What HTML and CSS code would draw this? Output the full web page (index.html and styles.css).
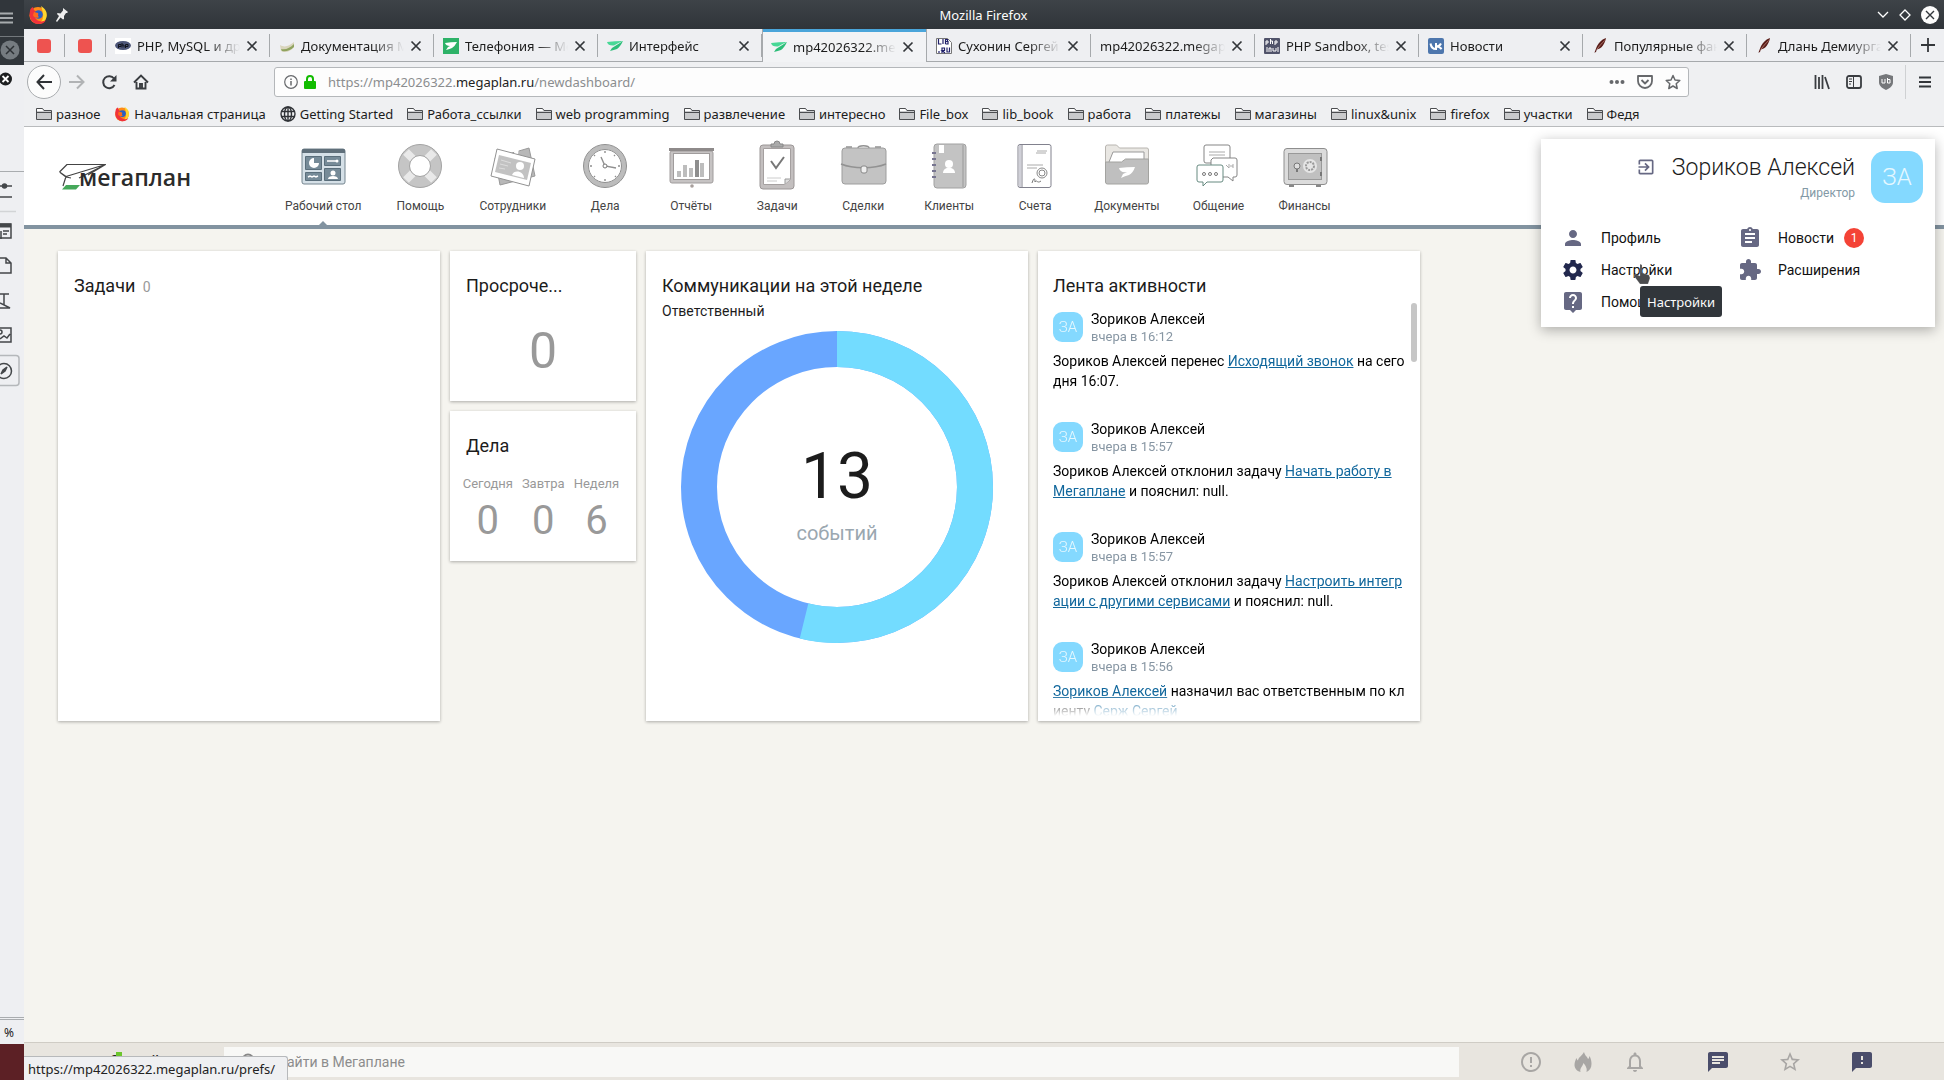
FILE: index.html
```html
<!DOCTYPE html>
<html lang="ru">
<head>
<meta charset="utf-8">
<title>Мегаплан — Рабочий стол</title>
<link rel="stylesheet" href="styles.css">
</head>
<body>
<svg class="defs" aria-hidden="true">
  <symbol id="folder" viewBox="0 0 16 16"><path d="M.5 13.500V2.500h6l1.500 2h7.500v9z" fill="#c9cacc" stroke="#4b4d50"/><path d="M.5 6.500h15" stroke="#4b4d50"/><path d="M1 3h5l1.500 2H1z" fill="#fff"/></symbol>
  <symbol id="close" viewBox="0 0 12 12"><path d="M1.500 1.500l9 9m0-9l-9 9" stroke="#33363a" stroke-width="1.700"/></symbol>
  <symbol id="fox" viewBox="0 0 20 20"><circle cx="10" cy="10.500" r="8.500" fill="#ff8a16"/><path d="M13 1c5 3 6.500 7 5.500 11-1 4-4.500 7-8.500 7 5-3 7-7 3-18z" fill="#ffd52e"/><path d="M2 6C.5 12 3 18 10 19c4 .3 7-1.500 8-4-4 3-10 1-11-3-1-2 1-4 3-4L6 5 5 2C3 3 2 4 2 6z" fill="#f0323c"/><circle cx="10.500" cy="9.500" r="4.300" fill="#2a5fc4"/><path d="M6 7l4 1c1 1-1 3 1 4-2 2-6 0-6-2z" fill="#ff6a1a"/></symbol>
  <symbol id="wing" viewBox="0 0 16 16"><path d="M0 4q8-1 16-1-5 2-9 4.500Q1 8 0 4z" fill="#47d896"/><path d="M16 3q-3 6-6 8-3 1-7 2l2-3z" fill="#2bbd78"/></symbol>
  <symbol id="feather" viewBox="0 0 16 20"><path d="M15.500 0c-6 2-10 7-12 12L1 18.500l2-1 1-3c6-1 10-7 11.500-14.500z" fill="#5a1e1a"/><path d="M14 3c-4 4-7 7-9.500 11" stroke="#c48b80" fill="none"/></symbol>
  <symbol id="person" viewBox="0 0 24 24"><path d="M12 12c2.210 0 4-1.790 4-4s-1.790-4-4-4-4 1.790-4 4 1.790 4 4 4zm0 2c-2.670 0-8 1.340-8 4v2h16v-2c0-2.660-5.330-4-8-4z"/></symbol>
</svg>

<aside class="behind" aria-hidden="true">
  <div class="behind-title"><svg width="24" height="36"><path d="M0 13.500h13M0 18h13M0 22.500h13" stroke="#a7abae" stroke-width="2"/></svg></div>
  <div class="behind-tab"><svg width="24" height="28"><circle cx="10" cy="13" r="9.500" fill="#757b80"/><path d="M6 9l8 8m0-8l-8 8" stroke="#2c3034" stroke-width="1.500"/></svg></div>
  <div class="behind-panel"><svg width="24" height="106"><circle cx="5.500" cy="14" r="6.500" fill="#1d1f21"/><path d="M2.500 11l6 6m0-6l-6 6" stroke="#fff" stroke-width="1.800"/></svg></div>
  <div class="behind-tools">
    <svg width="24" height="220" fill="none" stroke="#44474a" stroke-width="1.500"><path d="M0 14h12M0 25h12" /><circle cx="4.500" cy="14" r="2" fill="#44474a"/><path d="M0 39.500h16" stroke="#d2d4d6"/><path d="M0 52h11v14H0"/><path d="M0 53.500h11" stroke-width="4"/><path d="M3 59h6M3 62h4M1 59v8"/><path d="M0 86h6l5 5v10H0M6 86v5h5"/><path d="M0 122h9M4 122v11M0 131l10 5H0"/><path d="M0 156h11v14H0M0 167l4-3 3 2 3-4"/><circle cx="0" cy="160" r="2"/><rect x="-5" y="183.500" width="24" height="30" rx="3" stroke="#b5b8bb"/><circle cx="4" cy="199" r="7.500"/><path d="M1 202l2-4 4-3-2 4z" fill="#44474a"/></svg>
  </div>
  <div class="behind-zoom">%</div>
  <div class="behind-desktop"></div>
</aside>

<div class="window">
  <header class="titlebar">
    <div class="title-left"><svg width="20" height="20"><use href="#fox"/></svg><svg width="12" height="14" viewBox="0 0 12 14"><path d="M7 0l5 4-1 1h-1L8 8v3l-1 .500-2.500-2L1 14 0 13l3-5-2-2 .500-1 3 .500 2.500-3z" fill="#eee"/></svg></div>
    <span class="title-text">Mozilla Firefox</span>
    <div class="title-right">
      <button aria-label="Свернуть"><svg width="12" height="8"><path d="M1 1l5 5 5-5" fill="none" stroke="#fff" stroke-width="1.300"/></svg></button>
      <button aria-label="Развернуть"><svg width="12" height="12"><path d="M6 1l5 5-5 5-5-5z" fill="none" stroke="#fff" stroke-width="1.300"/></svg></button>
      <button aria-label="Закрыть"><svg width="18" height="18"><circle cx="9" cy="9" r="9" fill="#fcfcfc"/><path d="M5 5l8 8m0-8l-8 8" stroke="#31363b" stroke-width="1.400"/></svg></button>
    </div>
  </header>

  <nav class="tabs" aria-label="Вкладки">
    <a class="tab pinned" href="#" aria-label="Закреплённая вкладка"><i class="red"></i></a>
    <a class="tab pinned" href="#" aria-label="Закреплённая вкладка"><i class="red"></i></a>
    <div class="tab"><svg class="fav" viewBox="0 0 16 16"><path d="M0 0h16v16H0z" fill="#fff"/><ellipse cx="8" cy="7.500" rx="8" ry="4.500" fill="#4d5678"/><path d="M3.500 10V6.500H6v2H3.500M7 5v4.500m0-2.500h2v2.500M10.500 10V6.500H13v2h-2.500" fill="none" stroke="#11131c"/></svg><a href="#">PHP, MySQL и другие</a><button aria-label="Закрыть вкладку"><svg><use href="#close"/></svg></button></div>
    <div class="tab"><svg class="fav" viewBox="0 0 16 16"><path d="M1 7c5 3 9 1 14-3v5c-4 5-9 6-13 4z" fill="#d9d5bd"/><path d="M2 11c5 1 9-1 13-5v3c-4 4-9 5-12 4z" fill="#8fa35f"/></svg><a href="#">Документация Мегаплан</a><button aria-label="Закрыть вкладку"><svg><use href="#close"/></svg></button></div>
    <div class="tab"><svg class="fav" viewBox="0 0 16 16"><path d="M0 0h16v16H0z" fill="#2db268"/><path d="M2 5q6-1 12-1-2 4-5 6-2 1-6 2l2-3 2-1Q3 8 2 5z" fill="#fff"/></svg><a href="#">Телефония — Мегаплан</a><button aria-label="Закрыть вкладку"><svg><use href="#close"/></svg></button></div>
    <div class="tab"><svg class="fav"><use href="#wing"/></svg><a href="#">Интерфейс</a><button aria-label="Закрыть вкладку"><svg><use href="#close"/></svg></button></div>
    <div class="tab active"><svg class="fav"><use href="#wing"/></svg><a href="#">mp42026322.megaplan.ru</a><button aria-label="Закрыть вкладку"><svg><use href="#close"/></svg></button></div>
    <div class="tab"><svg class="fav" viewBox="0 0 16 16"><path d="M.5.5h11l4 4v11H.5z" fill="#fff" stroke="#777"/><path d="M2.500 1v5h3M7 1v5M9.500 6V1.500h2v2h-2m0 0h2.500V6h-2.500M6 15v-5h2.500v2.500H6l3 2.500M11 9.500V14h2.500V9.500M3 13v2" fill="none" stroke="#20206a" stroke-width="1.200"/></svg><a href="#">Сухонин Сергей Сергеевич</a><button aria-label="Закрыть вкладку"><svg><use href="#close"/></svg></button></div>
    <div class="tab"><a href="#">mp42026322.megaplan.ru</a><button aria-label="Закрыть вкладку"><svg><use href="#close"/></svg></button></div>
    <div class="tab"><svg class="fav" viewBox="0 0 16 16"><rect width="16" height="16" rx="1" fill="#50536a"/><path d="M2 7V3h2v2H2M6.500 1v5m0-3h2v3M11 7V3h2v2h-2M3 9v5M5 14v-4h2v4M9 10v3h3v-3M14 9v5" fill="none" stroke="#fff"/></svg><a href="#">PHP Sandbox, test PHP</a><button aria-label="Закрыть вкладку"><svg><use href="#close"/></svg></button></div>
    <div class="tab"><svg class="fav" viewBox="0 0 16 16"><rect width="16" height="16" rx="2" fill="#4d76ad"/><path d="M2.500 5.500c.5 3 2.500 5.500 5.500 5.500V5M13 5.500c-1 2-2.500 3-4.500 3 2 0 4 1 5 2.800" fill="none" stroke="#fff" stroke-width="2"/></svg><a href="#">Новости</a><button aria-label="Закрыть вкладку"><svg><use href="#close"/></svg></button></div>
    <div class="tab"><svg class="fav"><use href="#feather"/></svg><a href="#">Популярные фанфики</a><button aria-label="Закрыть вкладку"><svg><use href="#close"/></svg></button></div>
    <div class="tab"><svg class="fav"><use href="#feather"/></svg><a href="#">Длань Демиурга — глава</a><button aria-label="Закрыть вкладку"><svg><use href="#close"/></svg></button></div>
    <button class="newtab" aria-label="Новая вкладка"><svg width="14" height="14"><path d="M7 0v14M0 7h14" stroke="#33363a" stroke-width="1.800"/></svg></button>
  </nav>

  <div class="toolbar">
    <div class="history">
      <button class="back" aria-label="Назад"><svg width="16" height="16"><path d="M8 1L1.500 8 8 15M2 8h14" fill="none" stroke="#2f3236" stroke-width="2"/></svg></button>
      <button aria-label="Вперёд"><svg width="16" height="16"><path d="M8 1.500L14.500 8 8 14.500M14 8H0" fill="none" stroke="#b1b3b5" stroke-width="2"/></svg></button>
      <button aria-label="Обновить"><svg width="16" height="16"><path d="M13.500 11A6 6 0 1 1 13 4.500" fill="none" stroke="#3a3d41" stroke-width="2"/><path d="M15.500 1v6.500H9z" fill="#3a3d41"/></svg></button>
      <button aria-label="Домой"><svg width="16" height="16"><path d="M1 8.500L8 1.500l7 7M3.500 8v6.500h9V8M7 14v-4h2v4" fill="none" stroke="#3a3d41" stroke-width="1.900"/></svg></button>
    </div>
    <div class="urlbar">
      <svg width="14" height="14"><circle cx="7" cy="7" r="6.300" fill="none" stroke="#67696c" stroke-width="1.200"/><path d="M7 6v4.500M7 3.500v1.500" stroke="#67696c" stroke-width="1.500"/></svg>
      <svg width="12" height="14"><path d="M3 7V4a3 3 0 0 1 6 0v3" fill="none" stroke="#12bc00" stroke-width="2"/><rect y="6" width="12" height="8" rx="1" fill="#12bc00"/></svg>
      <span class="url" role="textbox" aria-label="Адрес">https://mp42026322.<b>megaplan.ru</b>/newdashboard/</span>
      <button aria-label="Действия"><svg width="16" height="16"><g fill="#66686b"><circle cx="2.500" cy="8" r="2"/><circle cx="8" cy="8" r="2"/><circle cx="13.500" cy="8" r="2"/></g></svg></button>
      <button aria-label="Pocket"><svg width="16" height="16"><path d="M1 2h14v5a7 7 0 0 1-14 0zM4.500 6L8 9.500 11.500 6" fill="none" stroke="#66686b" stroke-width="1.800" stroke-linejoin="round"/></svg></button>
      <button aria-label="В закладки"><svg width="16" height="16"><path d="M8 1.500l2 4.500 4.800.5-3.600 3.200 1 4.800L8 12l-4.200 2.500 1-4.800L1.200 6.500 6 6z" fill="none" stroke="#66686b" stroke-width="1.500" stroke-linejoin="round"/></svg></button>
    </div>
    <div class="tools">
      <button aria-label="Библиотека"><svg width="16" height="16"><path d="M1.500 1v14M5 3v12M8.500 1v14M11 3l4 12" stroke="#3a3d41" stroke-width="1.800"/></svg></button>
      <button aria-label="Боковая панель"><svg width="16" height="16"><rect x="1" y="2" width="14" height="12" rx="2" fill="none" stroke="#3a3d41" stroke-width="1.800"/><path d="M7.500 2v12M3 5h3M3 7.500h3M3 10h2" stroke="#3a3d41"/></svg></button>
      <button aria-label="uBlock"><svg width="16" height="16"><path d="M8 0l7 2v6c0 4-3 6-7 8-4-2-7-4-7-8V2z" fill="#75777a"/><path d="M4 5v4h3V5M9.500 4v5H12V5.500H9.500" fill="none" stroke="#fff"/></svg></button>
      <button class="menu" aria-label="Меню"><svg width="14" height="14"><path d="M1 2.500h12M1 7h12M1 11.500h12" stroke="#33363a" stroke-width="2"/></svg></button>
    </div>
  </div>

  <nav class="bookmarks" aria-label="Закладки">
    <a href="#"><svg><use href="#folder"/></svg>разное</a>
    <a href="#"><svg><use href="#fox"/></svg>Начальная страница</a>
    <a href="#"><svg viewBox="0 0 16 16"><g fill="none" stroke="#2f3236" stroke-width="1.400"><circle cx="8" cy="8" r="7"/><ellipse cx="8" cy="8" rx="3.500" ry="7"/><path d="M1 5.500h14M1 10.500h14M8 1v14"/></g></svg>Getting Started</a>
    <a href="#"><svg><use href="#folder"/></svg>Работа_ссылки</a>
    <a href="#"><svg><use href="#folder"/></svg>web programming</a>
    <a href="#"><svg><use href="#folder"/></svg>развлечение</a>
    <a href="#"><svg><use href="#folder"/></svg>интересно</a>
    <a href="#"><svg><use href="#folder"/></svg>File_box</a>
    <a href="#"><svg><use href="#folder"/></svg>lib_book</a>
    <a href="#"><svg><use href="#folder"/></svg>работа</a>
    <a href="#"><svg><use href="#folder"/></svg>платежы</a>
    <a href="#"><svg><use href="#folder"/></svg>магазины</a>
    <a href="#"><svg><use href="#folder"/></svg>linux&amp;unix</a>
    <a href="#"><svg><use href="#folder"/></svg>firefox</a>
    <a href="#"><svg><use href="#folder"/></svg>участки</a>
    <a href="#"><svg><use href="#folder"/></svg>Федя</a>
  </nav>

  <div class="page">
    <header class="site-header">
      <a class="logo" href="#" aria-label="Мегаплан"><svg width="50" height="28" viewBox="0 0 50 28" fill="none" stroke="#444" stroke-width="1.200"><path d="M1.500 9L9 1.500h38.500L30 12M1.500 9l6.500 4.500L47.500 1.500 21 15M8 13.500L5 23M1.500 9l6.500 5 5 1" stroke-linejoin="round"/><path d="M8 22h14l-4 4.500H4z" fill="#45a85a" stroke="none"/></svg><span>мегаплан</span></a>
      <nav class="sections" aria-label="Разделы">
        <a class="current" href="#"><svg viewBox="0 0 44 44"><rect x="1" y="5" width="43" height="35" rx="2" fill="#d5e0e7" stroke="#75858f"/><path d="M1 9V6l1-1h41l1 1v3z" fill="#5f6f7a"/><g fill="#768b98" stroke="#5a6e7b"><path d="M4.500 12.500h16v13h-16zM23.500 12.500h16v9h-16zM4.500 28.500h16v8h-16zM23.500 24.500h16v12h-16z"/></g><path d="M13 14v5h5a5 5 0 1 1-5-5zM27 35c0-4 10-4 10 0z" fill="#fff"/><circle cx="32" cy="29" r="2.500" fill="#fff"/><path d="M26 17h10M7 33l2-1 2 1 2-1 2 1 2-1" stroke="#fff" fill="none" stroke-width="1.500"/><circle cx="36" cy="17" r="1.500" fill="#fff"/></svg>Рабочий стол</a>
        <a href="#"><svg viewBox="0 0 44 44"><circle cx="22" cy="22" r="16" fill="none" stroke="#c5c5c5" stroke-width="11"/><path d="M8 8l7 7M29 29l7 7M36 8l-7 7M15 29l-7 7" stroke="#e9e9e9" stroke-width="8"/><g fill="none" stroke="#a3a3a3"><circle cx="22" cy="22" r="21.500"/><circle cx="22" cy="22" r="10.500"/></g></svg>Помощь</a>
        <a href="#"><svg viewBox="0 0 44 44"><path d="M4 14L38 4l6 28L9 41z" fill="#b8b8b8" stroke="#999"/><path d="M6 5l38 10-6 27L0 32z" fill="#fff" stroke="#929292"/><path d="M8 11l32 8-4 17-32-8z" fill="#c2c2c2"/><circle cx="29" cy="22" r="4" fill="#fff"/><path d="M21 31c2-6 12-4 12 3zM24 3l4 1-1 6-4-1z" fill="#fff"/><path d="M10 16l10 3M9 20l8 2M8 24l6 1" stroke="#ddd"/></svg>Сотрудники</a>
        <a href="#"><svg viewBox="0 0 44 44"><circle cx="22" cy="22" r="19" fill="#fff" stroke="#bcbcbc" stroke-width="4.500"/><g fill="none" stroke="#8f8f8f"><circle cx="22" cy="22" r="21.500"/><circle cx="22" cy="22" r="16.500"/><path d="M18 13l4 9 11 2M22 7v2M22 35v2M7 22h2M35 22h2M11 11l1 1M32 32l1 1M32 11l-1 1M11 33l1-1" stroke-width="1.400"/></g><circle cx="22" cy="22" r="2" fill="#fff" stroke="#777"/></svg>Дела</a>
        <a href="#"><svg viewBox="0 0 44 44"><rect x="1" y="7" width="43" height="32" rx="2" fill="#c6c3c3" stroke="#a09c9c"/><rect x="4.500" y="9.500" width="36" height="26" fill="#fff" stroke="#a09c9c"/><path d="M0 4h45v3H0z" fill="#8e8a8a"/><path d="M8 27h4v6H8zM14 21h4v12h-4zM20 24h4v9h-4zM31 19h4v14h-4z" fill="#bdbdbd"/><path d="M26 16h4v17h-4z" fill="#8e8e8e"/><circle cx="23" cy="42" r="1.800" fill="#a79f9c"/></svg>Отчёты</a>
        <a href="#"><svg viewBox="0 0 44 44"><rect x="5" y="1" width="34" height="44" rx="3" fill="#c3bfbf" stroke="#9b9696"/><path d="M8.500 4.500h27v31l-6 5h-21z" fill="#fff" stroke="#a5a0a0"/><path d="M30 40v-5h5" fill="#ddd" stroke="#999"/><path d="M16 3V0h3a3 3 0 0 1 6 0h3v3z" fill="#aaa" stroke="#888"/><path d="M16 17l5 7 8-11" fill="none" stroke="#777" stroke-width="2"/><path d="M12 34h14M12 37h10" stroke="#ccc"/></svg>Задачи</a>
        <a href="#"><svg viewBox="0 0 44 44"><rect x="1" y="4" width="44" height="36" rx="3" fill="#c3c3c3" stroke="#9d9d9d"/><path d="M0 20c12 5 33 5 45 0M17 4c0-3 11-3 11 0M5 3h6M34 3h6" fill="none" stroke="#929292" stroke-width="1.400"/><rect x="20" y="22" width="6" height="7" rx="2" fill="#eee" stroke="#888"/></svg>Сделки</a>
        <a href="#"><svg viewBox="0 0 44 44"><rect x="7" y="0" width="32" height="44" rx="3" fill="#c3c3c3" stroke="#a1a1a1"/><path d="M36 1v42" stroke="#999"/><path d="M12 1h5v8h-5z" fill="#fff"/><path d="M5 9h4M5 15h4M5 21h4M5 27h4M5 33h4" stroke="#777590" stroke-width="2"/><circle cx="22" cy="20" r="4" fill="#fff"/><path d="M16 29c0-7 12-7 12 0z" fill="#fff"/></svg>Клиенты</a>
        <a href="#"><svg viewBox="0 0 44 44"><rect x="5" y="0.500" width="33" height="43" rx="2" fill="#fff" stroke="#81818d"/><path d="M9 1v42" stroke="#81818d"/><path d="M6 1h2v42H6z" fill="#d0d0d8"/><path d="M24 7h10M23 9h10M14 21h16M14 24h10" stroke="#aaa"/><circle cx="29" cy="29" r="5" fill="none" stroke="#888"/><circle cx="29" cy="29" r="3" fill="none" stroke="#888"/><path d="M19 39c2-6 3-5 3-1 2-3 2 2 6-1" fill="none" stroke="#777"/></svg>Счета</a>
        <a href="#"><svg viewBox="0 0 44 44"><path d="M0.500 18V3q0-2 2-2h9l3 3H42q1.500 0 1.500 2v15" fill="#e9e7e3" stroke="#b8b5b0"/><path d="M4 18l4-10h31v12H4z" fill="#fff" stroke="#999"/><path d="M0.500 38V18h16l4-3h23v23q0 2-2 2h-39q-2 0-2-2z" fill="#bfbfbf" stroke="#a3a3a0"/><path d="M14 24q8-1 16-1-2 6-6 8-4 1-8 3l2-4 4-2q-7 1-8-4z" fill="#fff"/></svg>Документы</a>
        <a href="#"><svg viewBox="0 0 44 44"><g fill="#fff" stroke="#858585"><path d="M11 1h20q2 0 2 2v16H9q-2 0-2-2V3q0-2 2-2z"/><path d="M16 14h22q2 0 2 2v15q0 2-2 2h-2v4l-5-4H14V16z"/><path d="M2 21h22q2 0 2 2v13q0 2-2 2H10l-4 4v-4H2q-2 0-2-2V23q0-2 2-2z" stroke="#668a80"/></g><path d="M12 8h16M12 11h16M29 21l3 3v-4m4 0v4m-3-2h3" stroke="#aaa" fill="none"/><g fill="none" stroke="#777"><circle cx="7" cy="30" r="1.500"/><circle cx="13" cy="30" r="1.500"/><circle cx="19" cy="30" r="1.500"/></g></svg>Общение</a>
        <a href="#"><svg viewBox="0 0 44 44"><path d="M6 40h5v3H6zM33 40h5v3h-5z" fill="#888"/><rect x="1" y="4.500" width="43" height="36" rx="3" fill="#dcdcdc" stroke="#8e8e8e"/><rect x="5.500" y="9.500" width="33" height="26" fill="#c0c0c0" stroke="#999"/><circle cx="14" cy="22" r="3" fill="#ddd" stroke="#777"/><path d="M14 25v3M38 13v4M38 28v4" stroke="#777" stroke-width="2"/><circle cx="27" cy="22" r="7" fill="#e5e5e5"/><circle cx="27" cy="22" r="4" fill="none" stroke="#999" stroke-width="2" stroke-dasharray="2 1"/></svg>Финансы</a>
      </nav>
    </header>

    <main class="widgets">
      <section class="card big"><h2>Задачи <small>0</small></h2></section>
      <section class="card small-card"><h2>Просроче...</h2><p class="total">0</p></section>
      <section class="card big">
        <h2>Коммуникации на этой неделе</h2>
        <p class="sub">Ответственный</p>
        <div class="donut">
          <svg viewBox="0 0 312 312"><circle cx="156" cy="156" r="138" fill="none" stroke="#69a6ff" stroke-width="36"/><circle cx="156" cy="156" r="138" fill="none" stroke="#73dcff" stroke-width="36" pathLength="13" stroke-dasharray="7 6" transform="rotate(-90 156 156)"/></svg>
          <div class="donut-text"><strong>13</strong><span>событий</span></div>
        </div>
      </section>
      <section class="card big feed">
        <h2>Лента активности</h2>
        <div class="feed-list">
          <article><div class="who"><span class="avatar">ЗА</span><div><b>Зориков Алексей</b><time>вчера в 16:12</time></div></div><p>Зориков Алексей перенес <a href="#">Исходящий звонок</a> на сего<br>дня 16:07.</p></article>
          <article><div class="who"><span class="avatar">ЗА</span><div><b>Зориков Алексей</b><time>вчера в 15:57</time></div></div><p>Зориков Алексей отклонил задачу <a href="#">Начать работу в<br>Мегаплане</a> и пояснил: null.</p></article>
          <article><div class="who"><span class="avatar">ЗА</span><div><b>Зориков Алексей</b><time>вчера в 15:57</time></div></div><p>Зориков Алексей отклонил задачу <a href="#">Настроить интегр<br>ации с другими сервисами</a> и пояснил: null.</p></article>
          <article><div class="who"><span class="avatar">ЗА</span><div><b>Зориков Алексей</b><time>вчера в 15:56</time></div></div><p><a href="#">Зориков Алексей</a> назначил вас ответственным по кл<br>иенту <a href="#">Серж Сергей</a></p></article>
        </div>
        <i class="thumb"></i>
      </section>
      <section class="card small-card deals"><h2>Дела</h2>
        <dl><div><dt>Сегодня</dt><dd>0</dd></div><div><dt>Завтра</dt><dd>0</dd></div><div><dt>Неделя</dt><dd>6</dd></div></dl>
      </section>
    </main>

    <footer class="bottombar">
      <div class="brand">Sputnik<i></i></div>
      <label class="search"><svg width="18" height="18"><circle cx="7" cy="7" r="5.500" fill="none" stroke="#888" stroke-width="2"/><path d="M11 11l6 6" stroke="#888" stroke-width="2"/></svg><input type="text" placeholder="Найти в Мегаплане" aria-label="Найти в Мегаплане"></label>
      <div class="quick">
        <button aria-label="Важное"><svg viewBox="0 0 24 24"><path d="M11 15h2v2h-2zm0-8h2v6h-2zm.990-5C6.470 2 2 6.480 2 12s4.470 10 9.990 10C17.520 22 22 17.520 22 12S17.520 2 11.990 2zM12 20c-4.420 0-8-3.580-8-8s3.580-8 8-8 8 3.580 8 8-3.580 8-8 8z"/></svg></button>
        <button aria-label="Срочное"><svg viewBox="0 0 24 24"><path d="M13 2c1 4 3 4 4 7 1-.5 1-1.500 1.500-3 1.500 3 2 5 2 8 0 4-2 6.500-5 8 1-4-1-6-3-9-1 4-4 5-3 9-4-1-6-4-6-7 0-3 1-5 2-7 .5 1 .5 2 1.500 2.500C7.500 7 11 6 13 2z"/></svg></button>
        <button aria-label="Уведомления"><svg viewBox="0 0 24 24"><path d="M12 22c1.100 0 2-.9 2-2h-4c0 1.100.9 2 2 2zm6-6v-5c0-3.070-1.630-5.640-4.500-6.320V4c0-.830-.670-1.500-1.500-1.500s-1.500.670-1.500 1.500v.680C7.640 5.360 6 7.920 6 11v5l-2 2v1h16v-1l-2-2zm-2 1H8v-6c0-2.480 1.510-4.500 4-4.500s4 2.020 4 4.500v6z"/></svg></button>
        <button class="wide dark" aria-label="Чат"><svg viewBox="0 0 24 24"><path d="M20 2H4c-1.100 0-1.990.9-1.990 2L2 22l4-4h14c1.100 0 2-.9 2-2V4c0-1.100-.9-2-2-2zM6 9h12v2H6V9zm8 5H6v-2h8v2zm4-6H6V6h12v2z"/></svg></button>
        <button class="wide" aria-label="Избранное"><svg viewBox="0 0 24 24"><path d="M22 9.240l-7.190-.620L12 2 9.190 8.630 2 9.240l5.460 4.730L5.820 21 12 17.270 18.180 21l-1.630-7.030L22 9.240zM12 15.400l-3.760 2.270 1-4.280-3.320-2.880 4.380-.380L12 6.100l1.710 4.040 4.380.380-3.320 2.880 1 4.280L12 15.400z"/></svg></button>
        <button class="wide dark" aria-label="Отзыв"><svg viewBox="0 0 24 24"><path d="M20 2H4c-1.100 0-1.990.9-1.990 2L2 22l4-4h14c1.100 0 2-.9 2-2V4c0-1.100-.9-2-2-2zm-7 12h-2v-2h2v2zm0-4h-2V6h2v4z"/></svg></button>
      </div>
    </footer>

    <div class="profile">
      <div class="profile-head">
        <button aria-label="Выйти"><svg width="20" height="20" viewBox="0 0 24 24"><path d="M10.090 15.590L11.500 17l5-5-5-5-1.410 1.410L12.670 11H3v2h9.670l-2.580 2.590zM19 3H5c-1.110 0-2 .9-2 2v4h2V5h14v14H5v-4H3v4c0 1.100.890 2 2 2h14c1.100 0 2-.9 2-2V5c0-1.100-.9-2-2-2z"/></svg></button>
        <div class="profile-name"><strong>Зориков Алексей</strong><span>Директор</span></div>
        <span class="avatar large">ЗА</span>
      </div>
      <div class="profile-menu">
        <a href="#"><svg><use href="#person"/></svg>Профиль</a>
        <a href="#"><svg viewBox="0 0 24 24"><path d="M19 3h-4.180C14.400 1.840 13.300 1 12 1c-1.300 0-2.400.840-2.820 2H5c-1.100 0-2 .9-2 2v14c0 1.100.9 2 2 2h14c1.100 0 2-.9 2-2V5c0-1.100-.9-2-2-2zm-7 0c.550 0 1 .450 1 1s-.450 1-1 1-1-.450-1-1 .450-1 1-1zm2 14H7v-2h7v2zm3-4H7v-2h10v2zm0-4H7V7h10v2z"/></svg>Новости<em>1</em></a>
        <a class="hovered" href="#"><svg viewBox="0 0 24 24"><path d="M19.430 12.980c.040-.320.070-.640.070-.980s-.030-.660-.070-.980l2.110-1.650c.190-.150.240-.420.120-.640l-2-3.460c-.120-.220-.390-.300-.610-.220l-2.490 1c-.520-.400-1.080-.730-1.690-.980l-.380-2.650C14.460 2.180 14.250 2 14 2h-4c-.250 0-.460.180-.490.420l-.380 2.650c-.610.250-1.170.590-1.690.980l-2.490-1c-.230-.090-.490 0-.610.220l-2 3.460c-.130.220-.070.490.120.640l2.110 1.650c-.040.320-.070.650-.070.980s.030.660.070.980l-2.110 1.650c-.190.150-.240.420-.120.640l2 3.460c.120.220.390.300.610.220l2.490-1c.520.400 1.080.730 1.690.980l.380 2.650c.030.240.240.420.490.420h4c.250 0 .460-.180.490-.420l.380-2.650c.610-.250 1.170-.590 1.690-.980l2.490 1c.230.090.490 0 .610-.220l2-3.460c.120-.220.070-.490-.120-.640l-2.110-1.650zM12 15.500c-1.930 0-3.500-1.570-3.500-3.500s1.570-3.500 3.500-3.500 3.500 1.570 3.500 3.500-1.570 3.500-3.500 3.500z"/></svg>Настройки</a>
        <a href="#"><svg viewBox="0 0 24 24"><path d="M20.500 11H19V7c0-1.100-.9-2-2-2h-4V3.500C13 2.120 11.880 1 10.500 1S8 2.120 8 3.500V5H4c-1.100 0-1.990.9-1.990 2v3.800H3.500c1.490 0 2.700 1.210 2.700 2.700s-1.210 2.700-2.700 2.700H2V20c0 1.100.9 2 2 2h3.800v-1.500c0-1.490 1.210-2.700 2.700-2.700 1.490 0 2.700 1.210 2.700 2.700V22H17c1.100 0 2-.9 2-2v-4h1.500c1.380 0 2.500-1.120 2.500-2.500S21.880 11 20.500 11z"/></svg>Расширения</a>
        <a href="#"><svg viewBox="0 0 24 24"><path d="M19 2H5c-1.110 0-2 .9-2 2v14c0 1.100.890 2 2 2h4l3 3 3-3h4c1.100 0 2-.9 2-2V4c0-1.100-.9-2-2-2zm-6 16h-2v-2h2v2zm2.070-7.750l-.9.920C13.450 11.900 13 12.500 13 14h-2v-.5c0-1.100.450-2.100 1.170-2.830l1.240-1.260c.370-.360.590-.860.590-1.410 0-1.100-.9-2-2-2s-2 .9-2 2H8c0-2.210 1.790-4 4-4s4 1.790 4 4c0 .880-.360 1.680-.930 2.250z"/></svg>Помощь</a>
      </div>
      <svg class="cursor" width="18" height="20"><path d="M7 0l2 1v8l7 2 1 3-2 6H7l-6-8 1-2 5 2z" fill="#4b4c4e" stroke="#fff" stroke-opacity=".35" stroke-width=".5"/></svg>
      <span class="tooltip" role="tooltip">Настройки</span>
    </div>
    <div class="status">https://mp42026322.megaplan.ru/prefs/</div>
  </div>
</div>
</body>
</html>
```
FILE: styles.css
```css
* { box-sizing: border-box; }
body {
  margin: 0;
  min-height: 100vh;
  display: grid;
  grid-template-columns: 24px 1fr;
  background: #f5f4ef;
  color: #1c1c1c;
  font: 14px/20px Roboto, "Noto Sans", sans-serif;
}
h2, p, dl, dd { margin: 0; }
button { padding: 0; border: 0; background: none; font: inherit; display: flex; align-items: center; justify-content: center; }
a { color: inherit; text-decoration: none; }
svg { display: block; flex: none; }
.defs { position: absolute; width: 0; height: 0; }

/* Edge of the window lying behind the browser */
.behind { display: flex; flex-direction: column; background: #eeeff2; overflow: hidden; }
.behind-title { height: 36px; background: #31363b; }
.behind-tab { height: 29px; background: #31363b; border-top: 1px solid #73787c; }
.behind-panel { height: 107px; border-bottom: 1px solid #a9acaf; }
.behind-tools { flex: 1; border-bottom: 3px double #a9acaf; }
.behind-zoom { height: 24px; padding-left: 4px; font: 12px/26px "Noto Sans", sans-serif; }
.behind-desktop { height: 36px; background: #5c2025; }

/* Browser frame */
.window { display: flex; flex-direction: column; min-width: 0; }
.titlebar, .tabs, .toolbar, .bookmarks, .tooltip, .status { font-family: "Noto Sans", sans-serif; font-size: 13px; }
.titlebar {
  display: grid;
  grid-template-columns: 1fr auto 1fr;
  align-items: center;
  height: 29px;
  padding: 0 5px 0 4px;
  background: linear-gradient(#3e4348, #2f3439);
  color: #fcfcfc;
}
.title-left, .title-right { display: flex; align-items: center; gap: 8px; }
.title-right { justify-content: flex-end; gap: 10px; }

.tabs { display: flex; height: 33px; background: #eeeff2; }
.tab {
  position: relative;
  flex: 1;
  min-width: 0;
  display: flex;
  align-items: center;
  gap: 6px;
  padding: 2px 12px 0 9px;
  border-bottom: 1px solid #a6a9ac;
}
.tab::after { content: ""; position: absolute; right: 0; top: 5px; bottom: 4px; width: 1px; background: #a6a9ac; }
.tab.pinned { flex: 0 0 41px; padding: 2px 1px 0 0; justify-content: center; }
.red { width: 14px; height: 14px; border-radius: 3px; background: #ee5350; }
.tab a { flex: 1; overflow: hidden; white-space: nowrap; -webkit-mask-image: linear-gradient(to left, transparent, #000 32px); mask-image: linear-gradient(to left, transparent, #000 32px); }
.tab button svg { width: 12px; height: 12px; }
.fav { width: 16px; height: 16px; }
.tab.active { padding-left: 8px; border: solid #a6a9ac; border-width: 0 1px; background: #f2f3f5; box-shadow: inset 0 3px #4aa5da; }
.tab.active::after { display: none; }
.newtab { width: 33px; border-bottom: 1px solid #a6a9ac; }

.toolbar { display: flex; align-items: center; gap: 125px; height: 40px; padding: 0 12px 0 3px; background: #eff0f2; }
.history, .tools { display: flex; align-items: center; gap: 16px; }
.history .back { width: 34px; height: 34px; margin-right: -8px; border: 1px solid #a9acaf; border-radius: 50%; background: #fcfcfc; }
.urlbar { flex: 1; display: flex; align-items: center; gap: 12px; height: 30px; padding: 0 7px 0 9px; border: 1px solid #b4b7ba; border-radius: 3px; background: #fdfdfd; }
.urlbar > svg + svg { margin-left: -6px; }
.url { flex: 1; color: #8b8d8f; }
.url b { font-weight: 400; color: #222; }
.tools .menu { height: 34px; padding-left: 12px; margin-left: -5px; border-left: 1px solid #cfd1d3; }

.bookmarks { display: flex; align-items: center; gap: 14px; height: 25px; padding: 0 12px; border-bottom: 1px solid #b9bbbd; background: #eff0f2; white-space: nowrap; }
.bookmarks a { display: flex; align-items: center; gap: 4px; }
.bookmarks svg { width: 16px; height: 16px; }

/* Megaplan */
.page { position: relative; flex: 1; display: flex; flex-direction: column; }
.site-header { display: flex; height: 102px; padding-left: 34px; background: #fff; border-bottom: 4px solid #8293a0; }
.logo { position: relative; width: 211px; padding: 36px 0 0 21px; color: #2b2b2b; font: 600 23px/28px "Open Sans", sans-serif; }
.logo svg { position: absolute; left: 0; top: 36px; }
.logo span { position: relative; }
.sections { display: flex; }
.sections a {
  position: relative;
  min-width: 86px;
  padding: 17px 16px 0;
  display: flex;
  flex-direction: column;
  align-items: center;
  gap: 8px;
  color: #444;
  font-size: 12px;
  white-space: nowrap;
}
.sections svg { width: 44px; height: 44px; overflow: visible; }
.sections .current::after { content: ""; position: absolute; bottom: 0; border: 4px solid transparent; border-top: 0; border-bottom-color: #8293a0; }

.widgets { flex: 1; display: grid; grid-template-columns: repeat(auto-fill, 186px); grid-auto-rows: 150px; gap: 10px; padding: 22px 34px; align-content: start; }
.card { position: relative; padding: 25px 16px 0; background: #fff; box-shadow: 0 1px 3px rgba(0, 0, 0, .3); }
.big { grid-column: span 2; grid-row: span 3; }
.deals { grid-column: 3; grid-row: 2; }
h2 { font-size: 18px; line-height: 20px; font-weight: 400; white-space: nowrap; }
h2 small { margin-left: 3px; color: #999; font-size: 14px; }
.total { margin-top: 35px; color: #999; text-align: center; font-size: 50px; line-height: 40px; }
.sub { margin-top: 5px; font-size: 14px; }
.deals dl { display: flex; justify-content: center; gap: 9px; margin-top: 18px; padding-right: 4px; color: #999; text-align: center; }
.deals dt { font-size: 13px; }
.deals dd { margin-top: 7px; font-size: 40px; line-height: 40px; }
.donut { position: relative; width: 312px; margin: 10px auto 0; }
.donut-text { position: absolute; inset: 0; display: flex; flex-direction: column; align-items: center; justify-content: center; gap: 12px; padding-top: 16px; }
.donut strong { font-size: 64px; line-height: 64px; font-weight: 400; }
.donut span { color: #9aa7b0; font-size: 20px; line-height: 24px; }

.feed { padding: 25px 15px 1px; display: flex; flex-direction: column; }
.feed-list { flex: 1; min-height: 0; margin-top: 13px; overflow: hidden; white-space: nowrap; color: #000; -webkit-mask-image: linear-gradient(to top, transparent 4px, #000 26px); mask-image: linear-gradient(to top, transparent 4px, #000 26px); }
.feed article { height: 110px; }
.who { display: flex; gap: 8px; height: 36px; }
.who b { display: block; font-weight: 400; line-height: 20px; }
.who time { display: block; color: #8796a3; font-size: 13px; line-height: 16px; }
.avatar { width: 30px; height: 30px; margin-top: 3px; border-radius: 9px; background: #84d9ff; color: #e6f8ff; font-size: 15px; line-height: 30px; text-align: center; font-weight: 300; }
.feed p { margin-top: 6px; }
.feed p a { color: #11679c; text-decoration: underline; }
.thumb { position: absolute; right: 3px; top: 52px; width: 6px; height: 59px; border-radius: 3px; background: #c6c6c6; }

.bottombar { display: flex; align-items: center; height: 38px; border-top: 1px solid #cfccc5; background: #e8e5df; }
.brand { position: relative; width: 200px; padding-left: 86px; color: #222; font-size: 16px; }
.brand i { position: absolute; left: 92px; top: 0; width: 6px; height: 6px; background: #6cc62c; }
.search { flex: 1; display: flex; align-items: center; gap: 12px; height: 30px; padding-left: 17px; background: #f8f8f6; }
.search input { flex: 1; border: 0; padding: 0 6px; background: none; font: inherit; }
.search input::placeholder { color: #8c8c8c; }
.quick { display: flex; padding: 0 46px; }
.quick button { width: 52px; fill: #a8a6a4; }
.quick .wide { width: 72px; }
.quick .wide:nth-child(4) { margin-left: 21px; }
.quick .dark { fill: #4a4d6b; }
.quick svg { width: 24px; height: 24px; }

.profile { position: absolute; right: 9px; top: 12px; width: 394px; height: 188px; padding: 12px 12px 0; background: #fff; box-shadow: 0 3px 12px rgba(0, 0, 0, .3); }
.profile-head { display: flex; justify-content: flex-end; gap: 16px; height: 71px; }
.profile-head button { align-self: flex-start; margin-top: 6px; fill: #666883; }
.profile-name { text-align: right; }
.profile-name strong { display: block; font-size: 23px; line-height: 34px; font-weight: 300; }
.profile-name span { display: block; color: #8399a6; font-size: 12px; line-height: 16px; }
.avatar.large { width: 52px; height: 52px; margin: 0; border-radius: 14px; font-size: 24px; line-height: 52px; }
.profile-menu { display: grid; grid-template-columns: 177px 1fr; grid-auto-rows: 32px; padding-left: 8px; color: #111; }
.profile-menu a { display: flex; align-items: center; gap: 16px; }
.profile-menu svg { width: 24px; height: 24px; fill: #666883; }
.profile-menu .hovered svg { fill: #22284d; }
.profile-menu em { width: 20px; height: 20px; margin-left: -6px; border-radius: 50%; background: #f44336; color: #fff; font-size: 12px; font-style: normal; text-align: center; }
.cursor { position: absolute; left: 92px; top: 125px; }
.tooltip { position: absolute; left: 99px; top: 147px; padding: 6px 7px 5px; border-radius: 3px; background: #31363b; color: #fcfcfc; }
.status { position: absolute; left: 0; bottom: 0; height: 24px; padding: 0 12px 0 4px; border: solid #b7b9bb; border-width: 1px 1px 0 0; border-top-right-radius: 3px; background: #eff0f2; color: #222; line-height: 25px; }
```
